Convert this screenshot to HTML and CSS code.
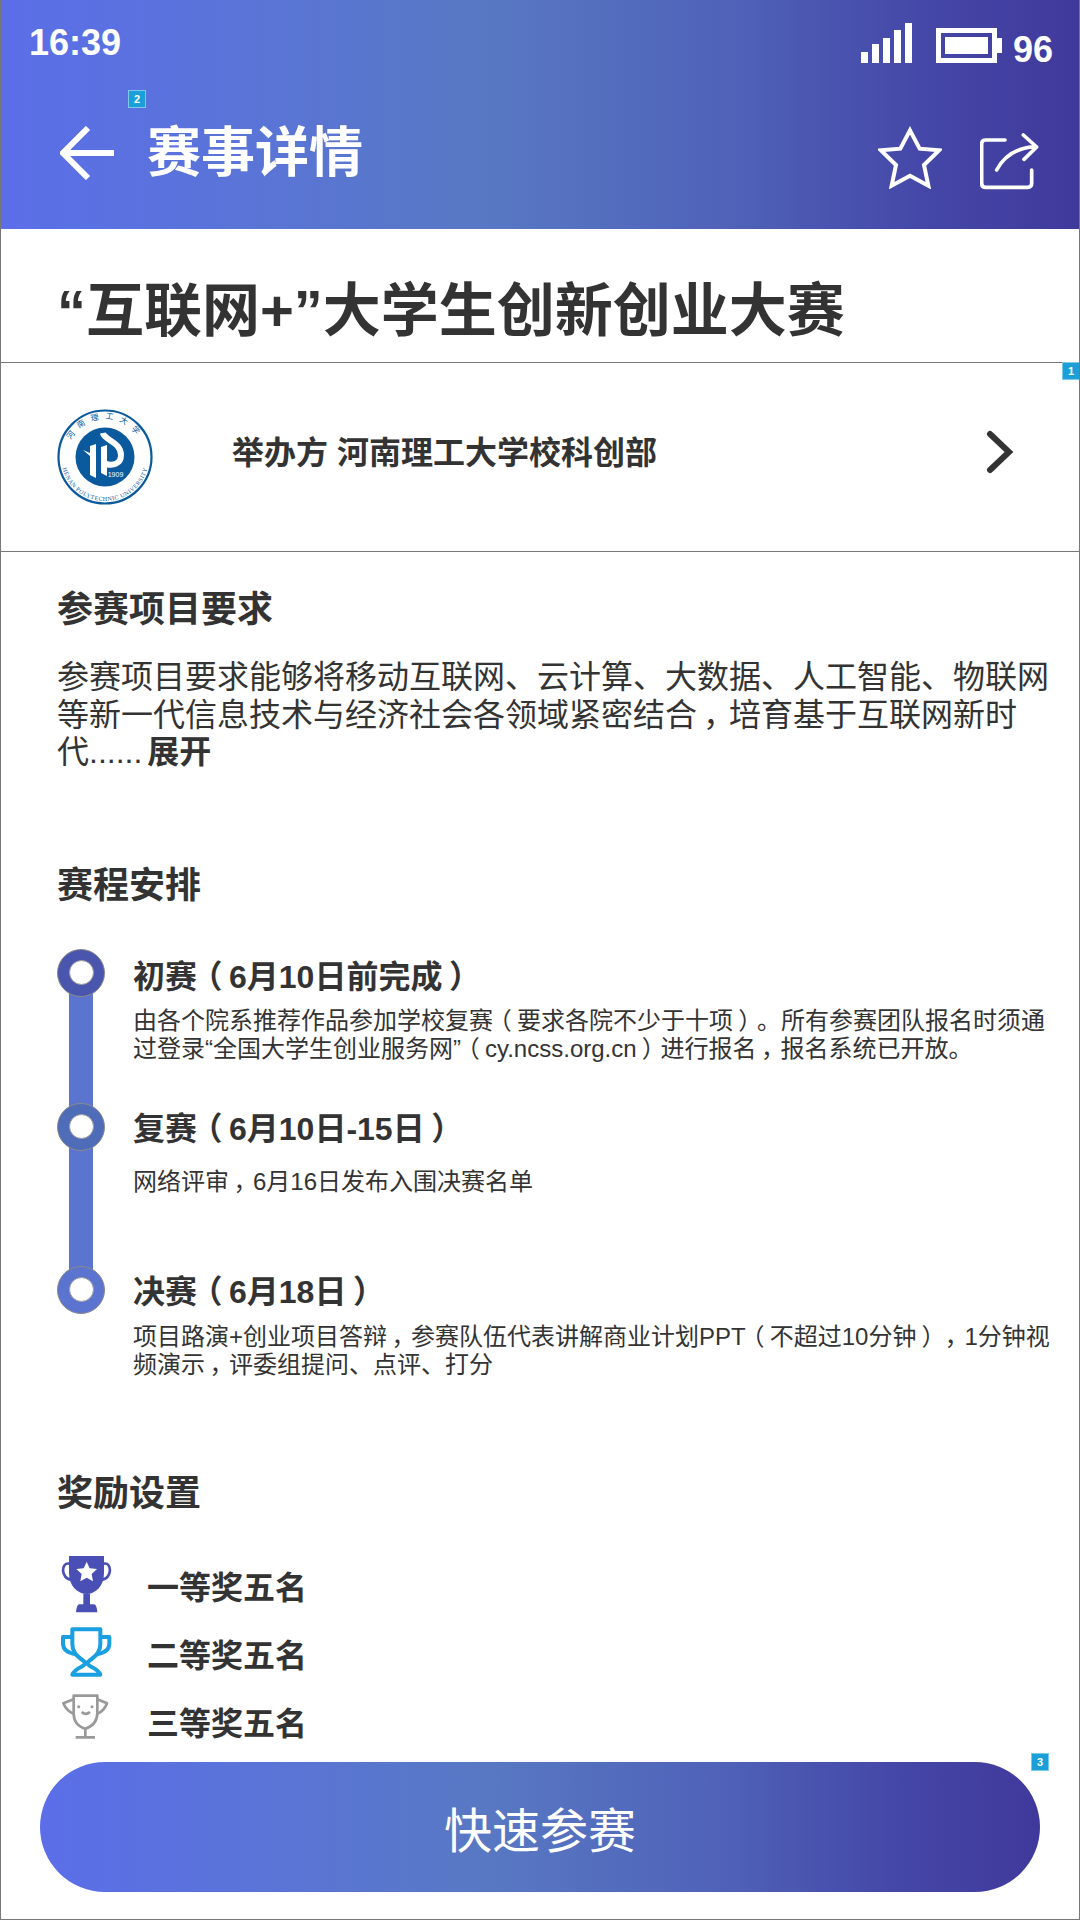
FILE: index.html
```html
<!DOCTYPE html>
<html lang="zh-CN">
<head>
    <meta charset="UTF-8">
    <meta name="viewport" content="width=device-width, initial-scale=1.0">
    <title>赛事详情</title>
    <link rel="stylesheet" href="styles.css">
</head>
<body>
    <div class="page">
        <header class="top">
            <div class="status">
                <span class="time">16:39</span>
                <div class="status-right">
                    <svg class="signal" width="51" height="40" viewBox="0 0 51 40">
                        <rect x="0" y="29" width="7" height="11" />
                        <rect x="11" y="21" width="7" height="19" />
                        <rect x="22" y="15" width="7" height="25" />
                        <rect x="33" y="7" width="7" height="33" />
                        <rect x="44" y="0" width="7" height="40" />
                    </svg>
                    <div class="battery"><div class="battery-fill"></div></div>
                    <div class="battery-nub"></div>
                    <span class="level">96</span>
                </div>
            </div>
            <nav class="bar">
                <svg class="back" width="54" height="54" viewBox="0 0 54 54">
                    <path d="M28 2 L3 27 L28 52 M3 27 H54" />
                </svg>
                <h1>赛事详情</h1>
                <svg class="star" width="64" height="64" viewBox="115 378 190 192">
                    <path d="M210 394 L239 449 L297 454 L252 498 L265 560 L210 530 L155 560 L168 498 L123 454 L181 449 Z" />
                </svg>
                <svg class="share" width="60" height="60" viewBox="420 390 180 180">
                    <path d="M495 420 H437 Q425 420 425 432 V550 Q425 562 437 562 H563 Q575 562 575 550 V510" />
                    <path d="M470 510 Q505 445 585 440 M550 405 L590 441 L552 478" />
                </svg>
            </nav>
            <span class="mark mark-two">2</span>
        </header>

        <div class="name-row">“互联网+”大学生创新创业大赛</div>

        <div class="org-row">
            <svg class="logo" width="96" height="96" viewBox="0 0 96 96">
                <defs>
                    <path id="ringTop" d="M10 48 A38 38 0 0 1 86 48" />
                    <path id="ringBottom" d="M4 48 A44 44 0 0 0 92 48" />
                </defs>
                <circle cx="48" cy="48" r="46.5" fill="#fff" stroke="#0b5a9e" stroke-width="2.2" />
                <circle cx="48" cy="48" r="29.5" fill="#0b5a9e" />
                <text class="ring-cn"><textPath href="#ringTop" startOffset="50%" text-anchor="middle">河南理工大学</textPath></text>
                <text class="ring-en"><textPath href="#ringBottom" startOffset="50%" text-anchor="middle">HENAN POLYTECHNIC UNIVERSITY</textPath></text>
                <path class="mark-fill" d="M26 41 L33 47 L33 66 L39 69 L39 35 L33 37 L33 44 Z" />
                <path class="mark-fill" d="M44 38 L50 36 L50 67 L44 64 Z" />
                <path class="mark-line" d="M46 24 C47 31 64 33 64 46 C64 55 56 57 49 55" />
                <text class="ring-year" x="58.5" y="68" text-anchor="middle">1909</text>
            </svg>
            <div class="org-name">举办方 河南理工大学校科创部</div>
            <svg class="more" width="30" height="44" viewBox="0 0 30 44">
                <path d="M5 4 L24 22 L5 40" />
            </svg>
        </div>
        <span class="mark mark-one">1</span>

        <main class="content">
            <h2 class="first">参赛项目要求</h2>
            <p class="intro">参赛项目要求能够将移动互联网、云计算、大数据、人工智能、物联网等新一代信息技术与经济社会各领域紧密结合<span class="pun">，</span>培育基于互联网新时代......<b>展开</b></p>

            <h2 class="schedule-title">赛程安排</h2>
            <div class="stages">
                <div class="stage stage-one">
                    <div class="marker">
                        <div class="dot dot-one"></div>
                        <div class="rail"></div>
                    </div>
                    <div class="stage-text">
                        <h3>初赛<span class="pun">（</span>6月10日前完成<span class="pun">）</span></h3>
                        <p>由各个院系推荐作品参加学校复赛<span class="pun">（</span>要求各院不少于十项<span class="pun">）</span>。所有参赛团队报名时须通过登录“全国大学生创业服务网”<span class="pun">（</span>cy.ncss.org.cn<span class="pun">）</span>进行报名<span class="pun">，</span>报名系统已开放。</p>
                    </div>
                </div>
                <div class="stage stage-two">
                    <div class="marker">
                        <div class="dot dot-two"></div>
                        <div class="rail"></div>
                    </div>
                    <div class="stage-text">
                        <h3>复赛<span class="pun">（</span>6月10日-15日<span class="pun">）</span></h3>
                        <p class="wide-gap">网络评审<span class="pun">，</span>6月16日发布入围决赛名单</p>
                    </div>
                </div>
                <div class="stage">
                    <div class="marker">
                        <div class="dot dot-three"></div>
                    </div>
                    <div class="stage-text">
                        <h3>决赛<span class="pun">（</span>6月18日<span class="pun">）</span></h3>
                        <p>项目路演+创业项目答辩<span class="pun">，</span>参赛队伍代表讲解商业计划PPT<span class="pun">（</span>不超过10分钟<span class="pun">）</span><span class="pun">，</span>1分钟视频演示<span class="pun">，</span>评委组提问、点评、打分</p>
                    </div>
                </div>
            </div>

            <h2 class="prize-title">奖励设置</h2>
            <ul class="prizes">
                <li>
                    <svg width="60" height="60" viewBox="81 81 180 180">
                        <path class="cup-one" d="M117 78 H222 V132 C222 172 196 195 170 195 C144 195 117 172 117 132 Z M160 195 H180 V226 H160 Z M148 226 H192 Q200 226 202 250 H138 Q140 226 148 226 Z" />
                        <path class="cup-one-handle" d="M118 104 C92 98 92 150 124 152 M221 104 C247 98 247 150 215 152" />
                        <path class="cup-star" d="M170 98 L179 118 L201 120 L185 135 L189 157 L170 146 L151 157 L155 135 L139 120 L161 118 Z" />
                    </svg>
                    <span>一等奖五名</span>
                </li>
                <li>
                    <svg width="60" height="60" viewBox="81 285 180 180">
                        <path class="cup-two" d="M127 301 H211 V345 Q211 372 185 390 Q172 399 172 402 Q172 406 185 414 Q206 424 211 437 H127 Q132 424 153 414 Q166 406 166 402 Q166 399 153 390 Q127 372 127 345 Z" />
                        <path class="cup-two" d="M127 324 H99 V345 Q100 370 138 376 M211 324 H238 V345 Q237 370 200 376" />
                    </svg>
                    <span>二等奖五名</span>
                </li>
                <li>
                    <svg width="60" height="60" viewBox="81 490 180 180">
                        <path class="cup-three" d="M131 501 H202 V555 Q200 590 166 600 Q132 590 131 555 Z M166 600 V626 M137 626 H195" />
                        <path class="cup-three" d="M131 512 L100 524 Q110 548 132 556 M202 512 L231 524 Q222 548 201 556" />
                        <path class="cup-three" d="M155 550 Q167 561 180 550" />
                        <circle class="cup-eye" cx="146" cy="534" r="4.5" />
                        <circle class="cup-eye" cx="186" cy="534" r="4.5" />
                    </svg>
                    <span>三等奖五名</span>
                </li>
            </ul>
        </main>

        <div class="join-wrap">
            <button class="join" type="button">快速参赛</button>
            <span class="mark mark-three">3</span>
        </div>
    </div>
</body>
</html>
```

FILE: styles.css
```css
/* 页面 */
html, body {
    margin: 0;
    padding: 0;
}

body {
    font-family: "Liberation Sans", "Noto Sans CJK SC", sans-serif;
    color: #333;
    background: #fff;
    text-spacing-trim: space-all;
}

.page {
    position: relative;
    width: 1080px;
    height: 1920px;
    box-sizing: border-box;
    border-left: 1px solid #777;
    border-right: 1px solid #777;
    border-bottom: 1px solid #777;
    overflow: hidden;
}

/* 括号和逗号居中 */
.pun {
    display: inline-block;
    width: 1em;
    text-align: center;
    font-feature-settings: "palt";
}

/* 顶部 */
.top {
    position: relative;
    height: 229px;
    margin: 0 -1px;
    color: #fff;
    background: linear-gradient(90deg, #5b6ee8 0%, #5a74d8 22%, #5878c3 45%, #4f62b8 68%, #4548a8 85%, #40399c 100%);
}

.status {
    display: flex;
    justify-content: space-between;
    height: 106px;
    box-sizing: border-box;
    padding: 24px 27px 0 29px;
}

.time {
    font-size: 36px;
    font-weight: bold;
    line-height: 38px;
}

.status-right {
    display: flex;
    align-items: flex-start;
    margin-top: -1px;
}

.signal {
    fill: #fff;
}

.battery {
    box-sizing: border-box;
    width: 61px;
    height: 35px;
    margin: 5px 0 0 24px;
    padding: 4px;
    border: 5px solid #fff;
}

.battery-fill {
    height: 100%;
    background: #fff;
}

.battery-nub {
    width: 5px;
    height: 15px;
    margin-top: 15px;
    background: #fff;
}

.level {
    margin: 9px 0 0 11px;
    font-size: 36px;
    font-weight: bold;
    line-height: 36px;
}

.bar {
    display: flex;
    align-items: center;
    height: 94px;
    padding: 0 40px 0 60px;
}

.bar h1 {
    flex: 1;
    margin: 0 0 0 33px;
    font-size: 54px;
    line-height: 60px;
    font-weight: bold;
}

.back path,
.star path,
.share path {
    fill: none;
    stroke: #fff;
}

.back path {
    stroke-width: 6;
}

.star {
    margin-top: 8px;
}

.star path {
    stroke-width: 12;
}

.share {
    margin: 14px 0 0 38px;
}

.share path {
    stroke-width: 11;
    stroke-linecap: round;
    stroke-linejoin: round;
}

/* 蓝色小标记 */
.mark {
    position: absolute;
    box-sizing: border-box;
    width: 18px;
    height: 18px;
    border: 1px solid #7cc9ea;
    font-size: 11px;
    font-weight: bold;
    line-height: 16px;
    text-align: center;
    color: #fff;
    background: #1b9fd8;
}

.mark-two {
    left: 128px;
    top: 90px;
}

.mark-one {
    left: 1061px;
    top: 362px;
}

.mark-three {
    left: 991px;
    top: -9px;
}

/* 标题和举办方 */
.name-row {
    height: 134px;
    box-sizing: border-box;
    padding-left: 56px;
    border-bottom: 1px solid #777;
    font-size: 58px;
    font-weight: bold;
    line-height: 164px;
    white-space: nowrap;
}

.org-row {
    display: flex;
    align-items: center;
    height: 189px;
    box-sizing: border-box;
    padding-left: 56px;
    border-bottom: 1px solid #777;
}

.logo {
    flex: none;
}

.ring-cn {
    font-size: 8px;
    letter-spacing: 6px;
    fill: #0b5a9e;
}

.ring-en {
    font-family: "Liberation Serif", serif;
    font-size: 6px;
    letter-spacing: 0.5px;
    fill: #0b5a9e;
}

.ring-year {
    font-size: 7px;
    fill: #fff;
}

.mark-fill {
    fill: #fff;
}

.mark-line {
    fill: none;
    stroke: #fff;
    stroke-width: 6;
}

.org-name {
    flex: 1;
    margin: 0 0 14px 79px;
    font-size: 32px;
    font-weight: bold;
}

.more {
    margin: 0 64px 10px 0;
}

.more path {
    fill: none;
    stroke: #333;
    stroke-width: 6;
    stroke-linecap: round;
}

/* 内容 */
.content {
    padding: 0 28px 0 56px;
}

h2 {
    margin: 0;
    font-size: 36px;
    line-height: 44px;
}

.first {
    padding-top: 36px;
}

.intro {
    margin: 27px 0 0;
    font-size: 32px;
    line-height: 37.5px;
}

.intro b {
    margin-left: 5px;
    font-weight: bold;
}

.schedule-title {
    margin-top: 92px;
}

.stages {
    margin-top: 41px;
}

.stage {
    display: flex;
    gap: 28px;
}

.stage-one {
    height: 154px;
}

.stage-two {
    height: 163px;
}

.marker {
    display: flex;
    flex-direction: column;
    align-items: center;
    flex: none;
    width: 48px;
}

.dot {
    position: relative;
    z-index: 1;
    flex: none;
    box-sizing: border-box;
    width: 48px;
    height: 48px;
    border: 1px solid #8a8a8a;
    border-radius: 50%;
    display: flex;
    align-items: center;
    justify-content: center;
}

.dot::after {
    content: "";
    box-sizing: border-box;
    width: 25px;
    height: 25px;
    border: 1px solid #999;
    border-radius: 50%;
    background: #fff;
}

.dot-one {
    background: #4a55ae;
}

.dot-two {
    background: #4f6cb8;
}

.dot-three {
    background: #5a74d0;
}

.rail {
    flex: 1;
    width: 24px;
    margin: -4px 0;
    background: #5a74cf;
}

.stage-text h3 {
    margin: 0;
    padding-top: 6px;
    font-size: 32px;
    line-height: 40px;
}

.stage-text p {
    margin: 11px 0 0;
    font-size: 24px;
    line-height: 28px;
}

.stage-one h3 {
    padding-top: 8px;
}

.stage-one p {
    margin-top: 10px;
}

.stage-text .wide-gap {
    margin-top: 19px;
}

.prize-title {
    margin-top: 93px;
}

.prizes {
    list-style: none;
    margin: 39px 0 0;
    padding: 0;
}

.prizes li {
    display: flex;
    align-items: center;
    gap: 30px;
    height: 68px;
    font-size: 32px;
    font-weight: bold;
}

.prizes li svg {
    margin-bottom: 5px;
}

.prizes li span {
    margin-bottom: 7px;
}

.cup-one {
    fill: #4a4fb5;
}

.cup-one-handle {
    fill: none;
    stroke: #4a4fb5;
    stroke-width: 8;
}

.cup-star {
    fill: #fff;
}

.cup-two {
    fill: none;
    stroke: #1a9fe0;
    stroke-width: 12;
    stroke-linejoin: round;
}

.cup-three {
    fill: none;
    stroke: #999;
    stroke-width: 8;
    stroke-linejoin: round;
}

.cup-eye {
    fill: #999;
}

/* 底部按钮 */
.join-wrap {
    position: relative;
    margin: 3px 39px 0;
}

.join {
    display: block;
    width: 1000px;
    height: 130px;
    border: none;
    border-radius: 65px;
    font-family: inherit;
    font-size: 48px;
    color: #fff;
    background: linear-gradient(90deg, #5b6ee8 0%, #5a74d8 22%, #5878c3 45%, #4f62b8 68%, #4548a8 85%, #40399c 100%);
}
```
